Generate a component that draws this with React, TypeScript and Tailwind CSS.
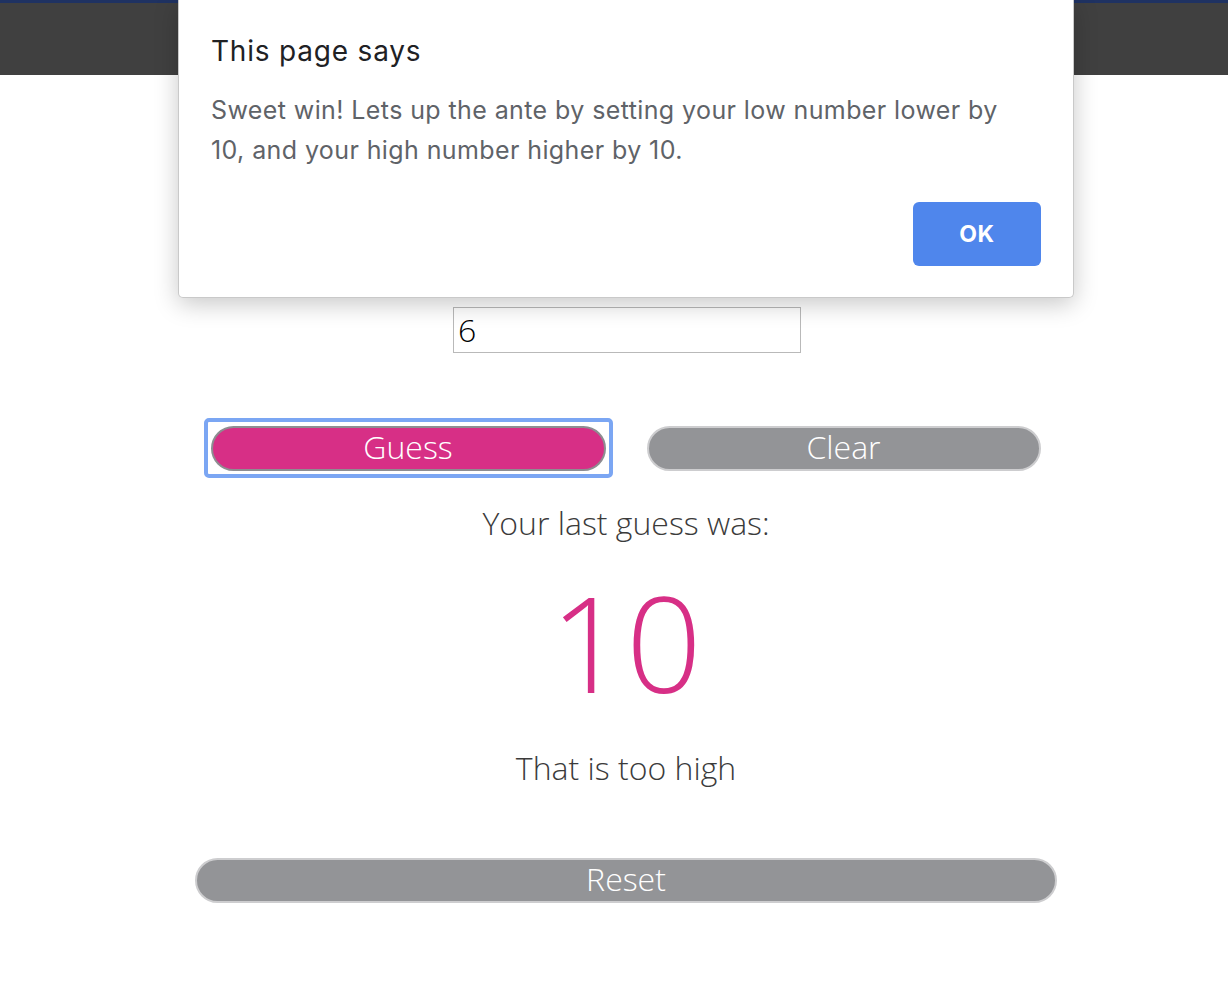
import React from 'react'

const openSans = "font-['Open_Sans',sans-serif] font-light"

function PillButton({ label, pink, wide }: { label: string; pink?: boolean; wide?: boolean }) {
  return (
    <button
      className={
        pink
          ? `h-[45px] w-[395px] rounded-full border-2 border-[#8d8d91] bg-[#d72f86] pb-[3px] text-[32px] leading-none text-white ${openSans}`
          : wide
          ? `h-[45px] w-[862px] rounded-full border-2 border-[#cdcdcf] bg-[#939497] pb-[3px] text-[32px] leading-none text-white ${openSans}`
          : `h-[45px] w-[394px] rounded-full border-2 border-[#cdcdcf] bg-[#939497] pb-[3px] text-[32px] leading-none text-white ${openSans}`
      }
    >
      {label}
    </button>
  )
}

export default function App() {
  return (
    <div className="relative min-h-[1004px] w-full overflow-hidden bg-white">
      {/* top bar behind the alert */}
      <header className="h-[75px] border-t-[3px] border-[#1f3262] bg-[#404040]" />

      <main className="flex flex-col items-center pl-6 pt-[232px]">
        <input
          readOnly
          value="6"
          className={`ml-[2px] h-[46px] w-[348px] border border-[#b9b9b9] px-[4px] text-[32px] text-black outline-none ${openSans}`}
        />

        <div className="mt-[73px] flex gap-[41px]">
          <div className="relative -ml-[1px]">
            <div className="pointer-events-none absolute -left-[7px] -right-[7px] -top-[8px] -bottom-[7px] rounded-[5px] border-[4px] border-[#7ba6f3]" />
            <PillButton label="Guess" pink />
          </div>
          <PillButton label="Clear" />
        </div>

        <p className={`mt-[31px] text-[32px] leading-[42px] text-[#3b3b3b] ${openSans}`}>Your last guess was:</p>

        <p className={`mt-[18px] text-[133px] leading-[160px] text-[#d72f86] ${openSans}`}>10</p>

        <p className={`mt-[25px] text-[32px] leading-[42px] text-[#3b3b3b] ${openSans}`}>That is too high</p>

        <div className="mt-[69px]">
          <PillButton label="Reset" wide />
        </div>
      </main>

      {/* browser alert */}
      <div className="absolute left-[178px] top-0 h-[298px] w-[896px] rounded-b-[5px] border border-t-0 border-[#c9c9c9] bg-white px-[32px] pt-[33px] font-['Inter',sans-serif] shadow-[0_6px_24px_rgba(0,0,0,0.22)]">
        <h2 className="text-[28px] leading-[36px] tracking-[0.8px] text-[#202124]">This page says</h2>
        <p className="mt-[21px] w-[820px] text-[25px] leading-[40px] tracking-[0.4px] text-[#5f6368]">
          Sweet win! Lets up the ante by setting your low number lower by 10, and your high number higher by 10.
        </p>
        <div className="mt-[32px] flex justify-end">
          <button className="h-[64px] w-[128px] rounded-[6px] bg-[#4f86ec] text-[23px] font-bold tracking-[0.5px] text-white">OK</button>
        </div>
      </div>
    </div>
  )
}
